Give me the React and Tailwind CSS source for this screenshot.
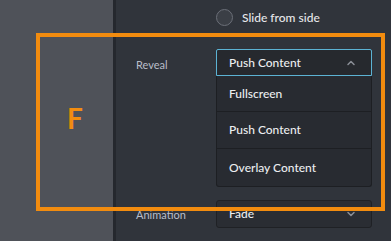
import { ChevronUp, ChevronDown } from "lucide-react";

const font = { fontFamily: "Lato, 'Noto Sans', sans-serif" };

const App = () => {
  return (
    <div
      className="relative flex w-[391px] h-[241px] overflow-hidden bg-[#30343b]"
      style={font}
    >
      {/* left sidebar */}
      <div className="w-[113px] h-full bg-[#4f5259]" />
      <div className="w-[3px] h-full bg-[#25282e]" />

      {/* settings panel */}
      <div className="flex-1 flex flex-col pl-[20px]">
        <div className="flex items-center gap-[9px] ml-[80px] mt-[9px] h-[17px]">
          <span className="w-[17px] h-[17px] rounded-full border border-[#6b6f78] bg-[#3b3f46]" />
          <span className="text-[12px] font-medium text-[#e6e7ea]">Slide from side</span>
        </div>

        <div className="flex mt-[23px]">
          <span className="w-[80px] pt-[8px] text-[11px] text-[#b9bdc9]">Reveal</span>
          <div className="relative w-[156px]">
            <div className="flex items-center justify-between h-[27px] pl-[12px] pr-[14px] border border-[#5cb3d4] rounded-t-[2px] bg-[#26292e] text-[12px] font-medium text-[#eceef0]">
              <span>Push Content</span>
              <ChevronUp className="w-[12px] h-[12px] text-[#8a8e96]" strokeWidth={3} />
            </div>
            <div className="absolute left-0 top-[27px] w-full flex flex-col bg-[#282b31] border border-t-0 border-[#1d1f23] rounded-b-[3px] text-[12px] font-medium text-[#eceef0]">
              <div className="h-[36px] flex items-center px-[12px] border-b border-[#1d1f23]">Fullscreen</div>
              <div className="h-[37px] flex items-center px-[12px] border-b border-[#1d1f23]">Push Content</div>
              <div className="h-[37px] flex items-center px-[12px]">Overlay Content</div>
            </div>
          </div>
        </div>

        <div className="flex mt-[124px]">
          <span className="w-[80px] pt-[7px] text-[11px] text-[#b9bdc9]">Animation</span>
          <div className="flex items-center justify-between w-[156px] h-[28px] pl-[12px] pr-[14px] border border-[#1f2125] rounded-[3px] bg-[#2a2d33] text-[12px] font-medium text-[#eceef0]">
            <span>Fade</span>
            <ChevronDown className="w-[12px] h-[12px] text-[#8a8e96]" strokeWidth={3} />
          </div>
        </div>
      </div>

      {/* annotation overlay */}
      <div className="absolute left-[36px] top-[33px] w-[349px] h-[178px] border-[4px] border-[#f28c0f] pointer-events-none">
        <span className="absolute left-[27px] top-[67px] text-[28px] leading-none font-bold text-[#f28c0f]">
          F
        </span>
      </div>
    </div>
  );
};

export default App;
